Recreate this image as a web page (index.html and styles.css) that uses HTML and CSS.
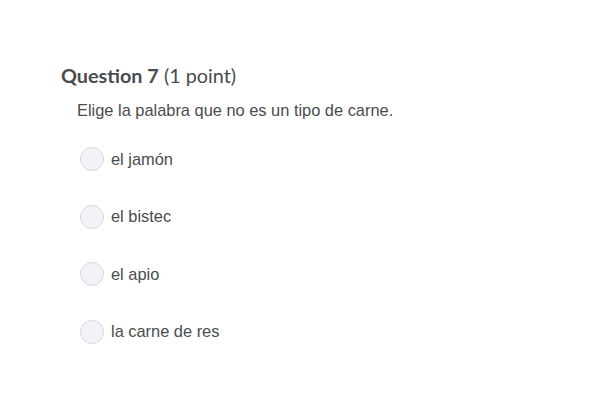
FILE: index.html
```html
<!DOCTYPE html>
<html>
<head>
<meta charset="utf-8">
<link rel="stylesheet" href="styles.css">
</head>
<body>
<div class="question">
  <h2 class="q-title"><span class="q-num">Question 7</span> <span class="q-pts">(1 point)</span></h2>
  <p class="q-text">Elige la palabra que no es un tipo de carne.</p>
  <ul class="options">
    <li class="option"><span class="radio"></span><span class="label">el jamón</span></li>
    <li class="option"><span class="radio"></span><span class="label">el bistec</span></li>
    <li class="option"><span class="radio"></span><span class="label">el apio</span></li>
    <li class="option"><span class="radio"></span><span class="label">la carne de res</span></li>
  </ul>
</div>
</body>
</html>
```
FILE: styles.css
```css
html, body {
  margin: 0;
  padding: 0;
  background: #ffffff;
}
.question {
  padding: 63px 0 0 61px;
}
.q-title {
  margin: 0;
  font-family: Lato, "Open Sans", sans-serif;
  font-size: 19.8px;
  line-height: 24px;
  color: #494c4e;
  font-weight: 400;
}
.q-num {
  font-weight: 700;
}
.q-text {
  margin: 13px 0 0 16px;
  font-family: "Liberation Sans", Arial, sans-serif;
  font-size: 16.4px;
  line-height: 20px;
  color: #494c4e;
}
.options {
  list-style: none;
  margin: 27px 0 0 19px;
  padding: 0;
}
.option {
  display: flex;
  align-items: center;
  height: 24px;
  margin-bottom: 33.5px;
}
.radio {
  width: 22px;
  height: 22px;
  border: 1px solid #d3d9e3;
  border-radius: 50%;
  background: #f1f3f7;
  flex: none;
}
.label {
  margin-left: 7px;
  font-family: "Liberation Sans", Arial, sans-serif;
  font-size: 16.4px;
  color: #494c4e;
}
```
